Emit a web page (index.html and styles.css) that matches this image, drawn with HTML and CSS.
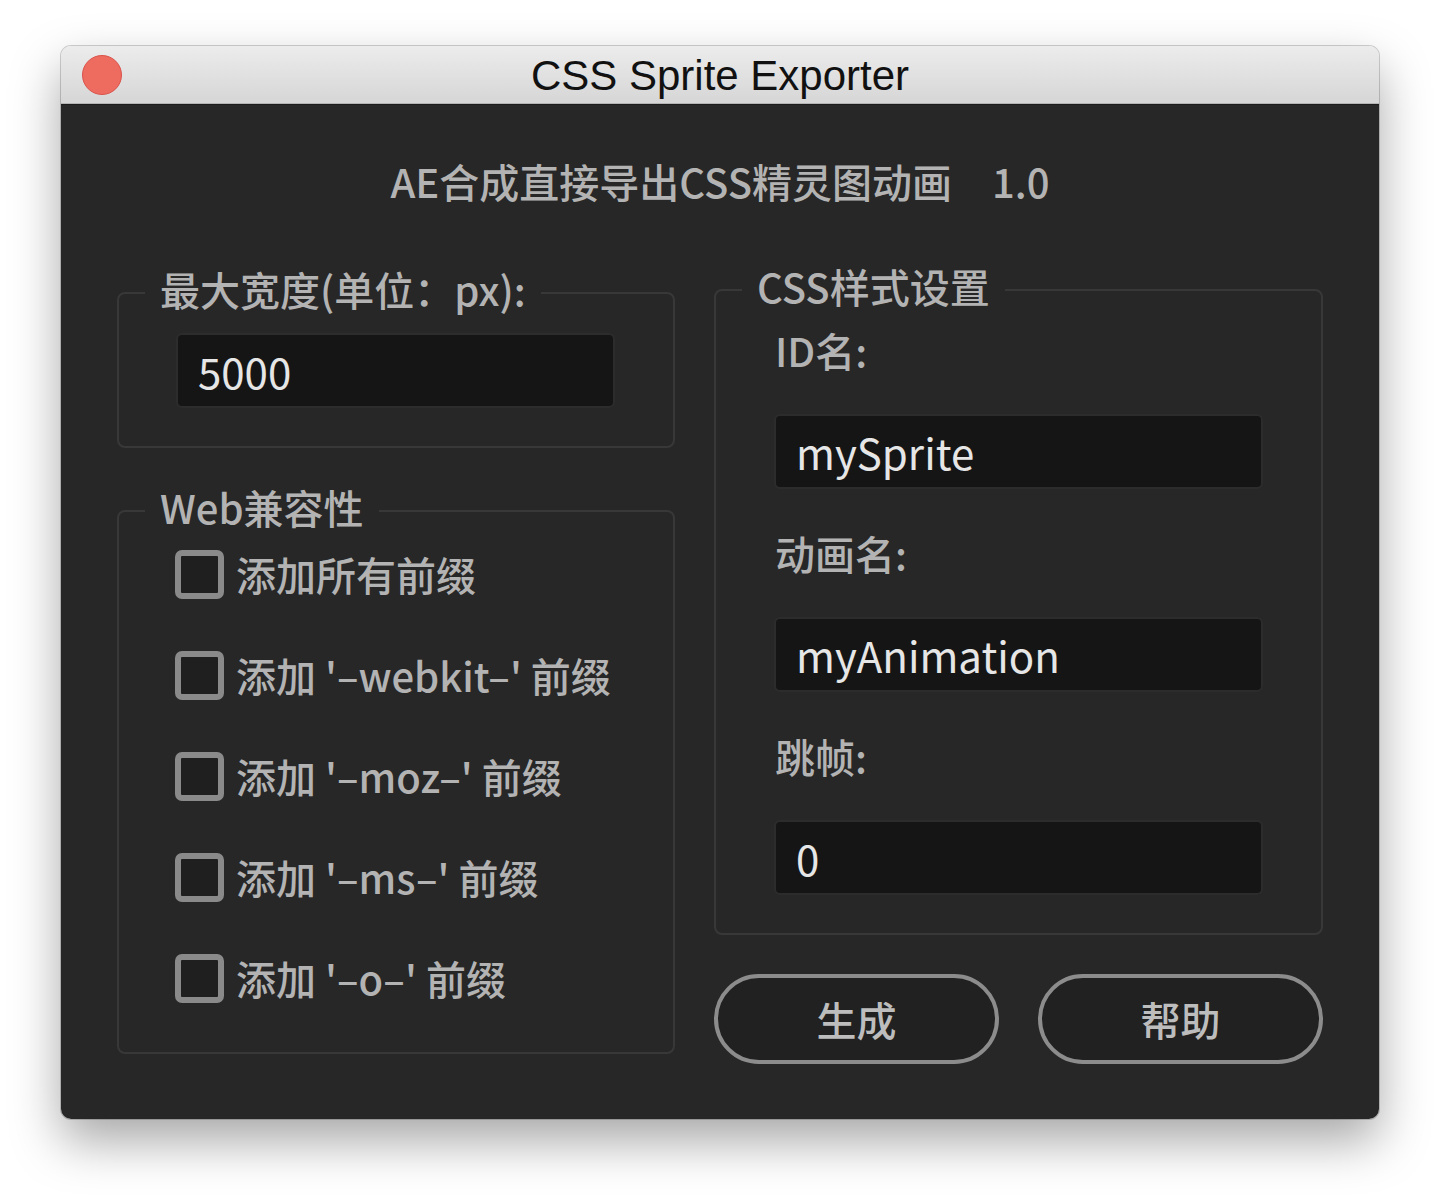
FILE: index.html
```html
<html>
<head>
<meta charset="utf-8">
<title>CSS Sprite Exporter</title>
<link rel="stylesheet" href="styles.css">
</head>
<body>

<div class="window">
    <div class="titlebar">
        <div class="lights"><span class="close"></span></div>
        <div class="title">CSS Sprite Exporter</div>
        <div></div>
    </div>

    <div class="panel">
        <div class="heading">AE合成直接导出CSS精灵图动画<span class="version">1.0</span></div>

        <div class="columns">
            <div class="col-left">
                <fieldset class="group">
                    <legend>最大宽度(单位：px):</legend>
                    <div class="group-body width-body">
                        <input class="field field-short" type="text" value="5000">
                    </div>
                </fieldset>

                <fieldset class="group group-web">
                    <legend>Web兼容性</legend>
                    <div class="group-body checks">
                        <label class="check"><span class="box"></span>添加所有前缀</label>
                        <label class="check"><span class="box"></span>添加 '–webkit–' 前缀</label>
                        <label class="check"><span class="box"></span>添加 '–moz–' 前缀</label>
                        <label class="check"><span class="box"></span>添加 '–ms–' 前缀</label>
                        <label class="check"><span class="box"></span>添加 '–o–' 前缀</label>
                    </div>
                </fieldset>
            </div>

            <div class="col-right">
                <fieldset class="group">
                    <legend>CSS样式设置</legend>
                    <div class="group-body css-body">
                        <div class="label label-first">ID名:</div>
                        <input class="field" type="text" value="mySprite">
                        <div class="label">动画名:</div>
                        <input class="field" type="text" value="myAnimation">
                        <div class="label">跳帧:</div>
                        <input class="field" type="text" value="0">
                    </div>
                </fieldset>

                <div class="buttons">
                    <button class="pill">生成</button>
                    <button class="pill">帮助</button>
                </div>
            </div>
        </div>
    </div>
</div>

</body>
</html>
```

FILE: styles.css
```css
body {
    margin: 0;
    padding: 46px 61px 0 61px;
    background-color: #ffffff;
    font-family: "Noto Sans CJK SC", "Noto Sans", sans-serif;
}

.window {
    width: 1318px;
    height: 1073px;
    border-radius: 10px;
    overflow: hidden;
    box-shadow: 0 0 0 1px rgba(0, 0, 0, 0.18), 0 22px 50px rgba(0, 0, 0, 0.35);
}

.titlebar {
    height: 57px;
    display: grid;
    grid-template-columns: 1fr auto 1fr;
    align-items: center;
    background: linear-gradient(#ececec, #d6d6d6);
    border-bottom: 1px solid #b4b4b4;
}

.close {
    display: block;
    width: 38px;
    height: 38px;
    margin-left: 21px;
    margin-top: 1px;
    border: 1px solid #d9534b;
    border-radius: 50%;
    background-color: #ee6b60;
}

.title {
    font-family: "Liberation Sans", Arial, sans-serif;
    font-size: 42px;
    color: #111111;
    padding-top: 2px;
}

.panel {
    height: 1015px;
    box-sizing: border-box;
    padding-top: 51px;
    background-color: #272727;
    border-top: 1px solid #1c1c1c;
}

.heading {
    text-align: center;
    font-size: 40px;
    line-height: 50px;
    font-weight: 500;
    color: #b3b3b3;
}

.version {
    margin-left: 40px;
}

.columns {
    display: flex;
    gap: 39px;
    padding: 0 56px;
    margin-top: 63px;
}

.col-left {
    width: 558px;
}

.col-right {
    width: 609px;
    margin-top: -3px;
}

.group {
    margin: 0;
    padding: 0;
    min-width: 0;
    border: 2px solid #383838;
    border-radius: 8px;
}

.group legend {
    margin-left: 26px;
    padding: 0 15px 8px 15px;
    font-size: 40px;
    line-height: 40px;
    font-weight: 500;
    color: #b3b3b3;
}

.group-web {
    margin-top: 39px;
}

.width-body {
    padding: 16px 0 38px 57px;
}

.field {
    display: block;
    width: 489px;
    height: 75px;
    box-sizing: border-box;
    padding: 0 0 0 20px;
    border: 2px solid #2c2c2c;
    border-radius: 6px;
    background-color: #151515;
    font-family: "Noto Sans CJK SC", "Noto Sans", sans-serif;
    font-size: 42px;
    color: #e6e6e6;
    outline: none;
}

.field-short {
    width: 439px;
}

.checks {
    display: flex;
    flex-direction: column;
    gap: 53px;
    padding: 15px 0 50px 56px;
}

.check {
    display: flex;
    align-items: center;
    gap: 12px;
    height: 48px;
    font-size: 40px;
    font-weight: 500;
    color: #b3b3b3;
    white-space: nowrap;
}

.box {
    width: 49px;
    height: 49px;
    box-sizing: border-box;
    border: 6px solid #8a8a8a;
    border-radius: 7px;
    background-color: #1f1f1f;
}

.css-body {
    padding: 12px 0 38px 58px;
}

.label {
    font-size: 40px;
    line-height: 48px;
    font-weight: 500;
    color: #b3b3b3;
    margin: 40px 0 40px 1px;
}

.label-first {
    margin-top: 0;
}

.buttons {
    display: flex;
    gap: 39px;
    margin-top: 39px;
}

.pill {
    width: 285px;
    height: 90px;
    border: 4px solid #8c8c8c;
    border-radius: 45px;
    background-color: #212121;
    font-family: "Noto Sans CJK SC", "Noto Sans", sans-serif;
    font-size: 40px;
    font-weight: 500;
    color: #bdbdbd;
}
```
